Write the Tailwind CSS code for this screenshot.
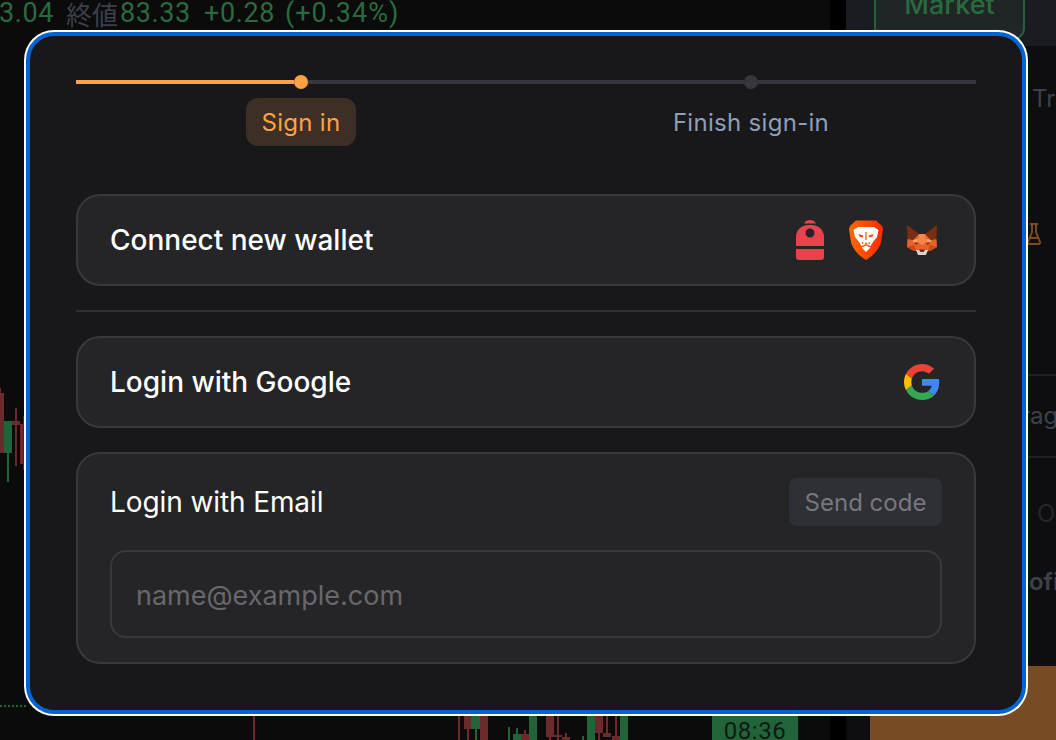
<!DOCTYPE html>
<html lang="en">
<head>
  <meta charset="UTF-8" />
  <title>Sign in</title>
  <script src="https://cdn.jsdelivr.net/npm/@tailwindcss/browser@4"></script>
</head>
<body class="bg-[#0b0b0c] font-['Inter',sans-serif]">
  <div class="relative w-[1056px] h-[740px] overflow-hidden">

    <!-- Chart behind the dialog -->
    <div class="absolute left-0 top-0 flex items-center h-[27px] text-[27px] tracking-[0.6px] leading-none whitespace-nowrap text-[#2a6a3f] font-['Roboto','Noto_Sans_CJK_JP',sans-serif]">
      <span class="-ml-[1px] w-[67px]">3.04</span>
      <span class="w-[54px] tracking-normal text-[26px] text-[#3c3f4a] font-['Noto_Sans_CJK_JP',sans-serif]">終値</span>
      <span class="w-[84px]">83.33</span>
      <span class="w-[81px]">+0.28</span>
      <span class="tracking-[1px]">(+0.34%)</span>
    </div>

    <!-- candles left -->
    <div class="absolute left-0 top-[388px] w-px h-[65px] bg-[#6d2a2c]"></div>
    <div class="absolute left-0 top-[393px] w-1 h-[60px] bg-[#6d2a2c]"></div>
    <div class="absolute left-[4px] top-[421px] w-2 h-[32px] bg-[#22633a]"></div>
    <div class="absolute left-[7px] top-[453px] w-[2px] h-[29px] bg-[#22633a]"></div>
    <div class="absolute left-[12px] top-[421px] w-2 h-[4px] bg-[#6d2a2c]"></div>
    <div class="absolute left-[15px] top-[408px] w-[2px] h-[58px] bg-[#6d2a2c]"></div>
    <div class="absolute left-[20px] top-[424px] w-[3px] h-[40px] bg-[#6d2a2c]"></div>
    <div class="absolute left-[23px] top-[416px] w-px h-[54px] bg-[#4a2426]"></div>
    <div class="absolute left-0 top-[705px] w-[26px] border-t-2 border-dotted border-[#22633a]"></div>

    <!-- candles bottom -->
    <div class="absolute left-[253px] top-[716px] w-[2px] h-[24px] bg-[#6d2a2c]"></div>
    <div class="absolute left-[458px] top-[716px] w-[2px] h-[24px] bg-[#6d2a2c]"></div>
    <div class="absolute left-[464px] top-[716px] w-[7px] h-[13px] bg-[#6d2a2c]"></div>
    <div class="absolute left-[467px] top-[729px] w-[2px] h-[11px] bg-[#6d2a2c]"></div>
    <div class="absolute left-[471px] top-[716px] w-[9px] h-[13px] bg-[#22633a]"></div>
    <div class="absolute left-[475px] top-[729px] w-[2px] h-[11px] bg-[#22633a]"></div>
    <div class="absolute left-[480px] top-[716px] w-2 h-[24px] bg-[#6d2a2c]"></div>
    <div class="absolute left-[508px] top-[727px] w-[2px] h-[13px] bg-[#22633a]"></div>
    <div class="absolute left-[513px] top-[734px] w-2 h-[6px] bg-[#22633a]"></div>
    <div class="absolute left-[516px] top-[728px] w-[2px] h-[6px] bg-[#22633a]"></div>
    <div class="absolute left-[521px] top-[734px] w-2 h-[6px] bg-[#6d2a2c]"></div>
    <div class="absolute left-[524px] top-[730px] w-[2px] h-[10px] bg-[#6d2a2c]"></div>
    <div class="absolute left-[529px] top-[716px] w-2 h-[24px] bg-[#22633a]"></div>
    <div class="absolute left-[546px] top-[716px] w-2 h-[21px] bg-[#6d2a2c]"></div>
    <div class="absolute left-[549px] top-[737px] w-[2px] h-[3px] bg-[#6d2a2c]"></div>
    <div class="absolute left-[554px] top-[735px] w-2 h-[2px] bg-[#6d2a2c]"></div>
    <div class="absolute left-[557px] top-[716px] w-[2px] h-[24px] bg-[#6d2a2c]"></div>
    <div class="absolute left-[562px] top-[737px] w-2 h-[3px] bg-[#6d2a2c]"></div>
    <div class="absolute left-[565px] top-[733px] w-[2px] h-[7px] bg-[#6d2a2c]"></div>
    <div class="absolute left-[582px] top-[736px] w-[2px] h-[4px] bg-[#22633a]"></div>
    <div class="absolute left-[587px] top-[716px] w-2 h-[24px] bg-[#22633a]"></div>
    <div class="absolute left-[595px] top-[716px] w-2 h-[17px] bg-[#6d2a2c]"></div>
    <div class="absolute left-[598px] top-[733px] w-[2px] h-[7px] bg-[#6d2a2c]"></div>
    <div class="absolute left-[603px] top-[733px] w-2 h-[4px] bg-[#6d2a2c]"></div>
    <div class="absolute left-[606px] top-[716px] w-[2px] h-[17px] bg-[#6d2a2c]"></div>
    <div class="absolute left-[612px] top-[736px] w-2 h-[4px] bg-[#6d2a2c]"></div>
    <div class="absolute left-[615px] top-[716px] w-[2px] h-[20px] bg-[#6d2a2c]"></div>
    <div class="absolute left-[620px] top-[716px] w-2 h-[24px] bg-[#22633a]"></div>

    <div class="absolute left-[712px] top-[716px] w-[86px] h-[24px] bg-[#22633a] text-[#0d1a12] text-[24px] tracking-[0.5px] leading-[30px] text-center font-['Roboto',sans-serif]">08:36</div>

    <!-- Right side panel behind the dialog -->
    <div class="absolute left-[830px] top-0 w-[16px] h-[740px] bg-black"></div>
    <div class="absolute left-[846px] top-0 w-[210px] h-[740px] bg-[#0e0e10]"></div>
    <div class="absolute left-[846px] top-0 w-[210px] h-[46px] bg-[#1b1c21]"></div>
    <div class="absolute left-[874px] -top-[30px] w-[151px] h-[70px] flex items-center justify-center rounded-b-xl border-2 border-[#22633a] bg-[#1f2625] text-[#2a6a3f] text-[27px] font-medium">Market</div>
    <div class="absolute left-[1032px] top-[84px] text-[24px] leading-[30px] text-[#3c414c] whitespace-nowrap">Tra</div>
    <svg class="absolute left-[1026px] top-[222px]" width="18" height="24" viewBox="0 0 18 24" fill="none" stroke="#7d4a1f" stroke-width="2"><path d="M4 2h8M6 2v8L2 20a1.5 1.5 0 0 0 1.5 2h9a1.5 1.5 0 0 0 1.5-2L10 10V2M4 16h9"/></svg>
    <div class="absolute left-[1028px] top-[374px] w-[28px] h-[2px] bg-[#1f2024]"></div>
    <div class="absolute left-[1028px] top-[456px] w-[28px] h-[2px] bg-[#1f2024]"></div>
    <div class="absolute left-[1021px] top-[401px] text-[24px] leading-[30px] text-[#3c414c] whitespace-nowrap">rag</div>
    <div class="absolute left-[1037px] top-[499px] text-[24px] leading-[30px] text-[#24262c] whitespace-nowrap">O</div>
    <div class="absolute left-[1029px] top-[567px] text-[24px] leading-[30px] font-semibold text-[#3c414c] whitespace-nowrap">ofi</div>
    <div class="absolute left-[870px] top-[666px] w-[186px] h-[74px] bg-[#774b24]"></div>

    <!-- Sign in dialog -->
    <div class="absolute left-[26px] top-[32px] w-[1000px] h-[682px] rounded-[28px] border-4 border-[#0064d2] ring-2 ring-white bg-[#18181a] px-[46px] pt-[39px] pb-[46px]">

      <!-- Stepper -->
      <div class="grid grid-cols-2 mb-12">
        <div class="flex flex-col items-center">
          <div class="flex items-center w-full h-[14px]">
            <div class="flex-1 h-1 bg-[#ffa245]"></div>
            <div class="w-[14px] h-[14px] rounded-full bg-[#ffa245]"></div>
            <div class="flex-1 h-1 bg-[#37363f]"></div>
          </div>
          <div class="mt-[9px] h-12 w-[110px] pt-[2px] flex items-center justify-center rounded-xl bg-[#3d2f25] text-[#ffa245] text-[24px] tracking-[0.3px]">Sign in</div>
        </div>
        <div class="flex flex-col items-center">
          <div class="flex items-center w-full h-[14px]">
            <div class="flex-1 h-1 bg-[#37363f]"></div>
            <div class="w-[14px] h-[14px] rounded-full bg-[#37363f]"></div>
            <div class="flex-1 h-1 bg-[#37363f]"></div>
          </div>
          <div class="mt-[9px] h-12 pt-[2px] flex items-center justify-center text-[#8e9fb8] text-[24px] tracking-[0.3px]">Finish sign-in</div>
        </div>
      </div>

      <!-- Connect wallet -->
      <div class="h-[92px] flex items-center justify-between pl-8 pr-8 rounded-3xl border-2 border-[#39393c] bg-[#252527]">
        <span class="text-white text-[28px] font-medium">Connect new wallet</span>
        <div class="flex items-center gap-4">
          <svg width="40" height="40" viewBox="0 0 40 40" fill="#e8434c">
            <path d="M14 3.5C15 1 17.5 0 20 0s5 1 6 3.5z"/>
            <path fill-rule="evenodd" d="M6 26V17A12 12 0 0 1 18 5h4a12 12 0 0 1 12 12v9zM20 8.5a4.5 4.5 0 1 0 0 9 4.5 4.5 0 0 0 0-9z"/>
            <path d="M6 29h28v8a3 3 0 0 1-3 3H9a3 3 0 0 1-3-3z"/>
          </svg>
          <svg width="40" height="40" viewBox="0 0 40 40">
            <defs><linearGradient id="brave" x1="0" y1="0" x2="1" y2="0"><stop offset="0" stop-color="#ff6a00"/><stop offset="1" stop-color="#ff2a00"/></linearGradient></defs>
            <path fill="url(#brave)" d="M10 0.5H30L36 6 37 9 35 22C34 28 27 36 20 40 13 36 6 28 5 22L3 9 4 6z"/>
            <path fill="#fff" d="M7.5 10 12 7H28L32.5 10 31 17 27 22 24.5 26 20 24 15.5 26 13 22 9 17z"/>
            <path fill="#ff4a00" d="M12.5 14 17.5 15.5 16.5 17.5 13.5 16.5zM27.5 14 22.5 15.5 23.5 17.5 26.5 16.5zM19.4 12h1.2v8h-1.2zM16 22 20 24 24 22 24 24 20 22.5 16 24z"/>
            <path fill="#fff" d="M15.5 27.5 20 25.5 24.5 27.5 20 32z"/>
          </svg>
          <svg width="40" height="40" viewBox="0 0 40 40">
            <path fill="#7a2d10" d="M5 5 17 14 11 20 5.5 19zM35 5 23 14 29 20 34.5 19z"/>
            <path fill="#e8622c" d="M11 20 17 14H23L29 20 34.5 19 35 27 28 31H12L5 27 5.5 19z"/>
            <path fill="#f6854a" d="M17 14H23L24.5 22 20 25 15.5 22z"/>
            <path fill="#f4a36b" d="M11 20 16 19 15 22 11 22zM29 20 24 19 25 22 29 22z"/>
            <path fill="#8a3413" d="M12 22.5 16.5 23 14 25zM28 22.5 23.5 23 26 25z"/>
            <path fill="#c84a14" d="M5 27 12 25 14 31 12 31zM35 27 28 25 26 31 28 31z"/>
            <path fill="#d9d0c8" d="M14 30H26L24 35H16z"/>
            <path fill="#6b2a18" d="M17 29.5H23L21.5 32H18.5z"/>
          </svg>
        </div>
      </div>

      <div class="h-[2px] my-6 bg-[#303032]"></div>

      <!-- Google -->
      <div class="h-[92px] flex items-center justify-between pl-8 pr-[34px] rounded-3xl border-2 border-[#39393c] bg-[#252527]">
        <span class="text-white text-[28px] font-medium">Login with Google</span>
        <svg width="36" height="36" viewBox="0 0 48 48">
          <path fill="#ea4335" d="M24 9.5c3.54 0 6.71 1.22 9.21 3.6l6.85-6.85C35.9 2.38 30.47 0 24 0 14.62 0 6.51 5.38 2.56 13.22l7.98 6.19C12.43 13.72 17.74 9.5 24 9.5z"/>
          <path fill="#4285f4" d="M46.98 24.55c0-1.57-.15-3.09-.38-4.55H24v9.02h12.94c-.58 2.96-2.26 5.48-4.78 7.18l7.73 6c4.51-4.18 7.09-10.36 7.09-17.65z"/>
          <path fill="#fbbc05" d="M10.53 28.59c-.48-1.45-.76-2.99-.76-4.59s.27-3.14.76-4.59l-7.98-6.19C.92 16.46 0 20.12 0 24c0 3.88.92 7.54 2.56 10.78l7.97-6.19z"/>
          <path fill="#34a853" d="M24 48c6.48 0 11.93-2.13 15.89-5.81l-7.73-6c-2.15 1.45-4.92 2.3-8.16 2.3-6.26 0-11.57-4.22-13.47-9.91l-7.98 6.19C6.51 42.62 14.62 48 24 48z"/>
        </svg>
      </div>

      <!-- Email -->
      <div class="mt-6 h-[212px] pt-6 pb-6 pl-8 pr-8 rounded-3xl border-2 border-[#39393c] bg-[#252527]">
        <div class="flex items-center justify-between">
          <span class="text-white text-[28px] font-normal tracking-[-0.1px]">Login with Email</span>
          <button class="h-12 w-[153px] pt-[2px] rounded-lg bg-[#2f2f36] text-[#77777d] text-[24px]">Send code</button>
        </div>
        <input type="text" placeholder="name@example.com" class="mt-6 w-full h-[88px] px-6 pt-[2px] rounded-2xl border-2 border-[#39393c] bg-[#252527] text-[27px] placeholder:text-[#68686c] outline-none" />
      </div>
    </div>
  </div>
</body>
</html>
